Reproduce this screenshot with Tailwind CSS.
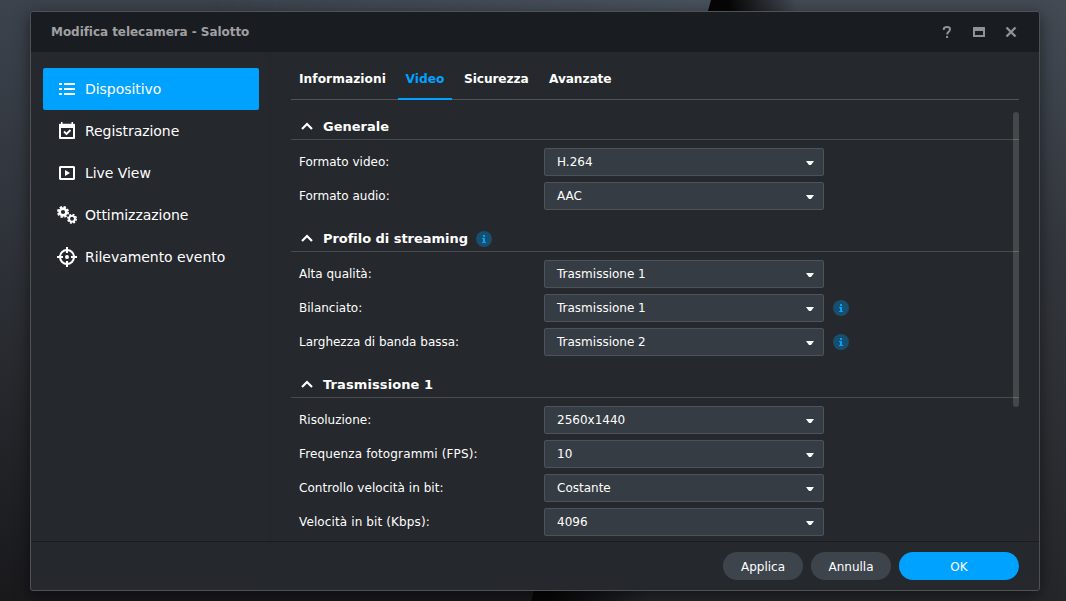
<!DOCTYPE html>
<html lang="it">
<head>
<meta charset="utf-8">
<title>Modifica telecamera</title>
<script src="https://cdn.jsdelivr.net/npm/@tailwindcss/browser@4"></script>
</head>
<body class="h-[601px] w-[1066px] overflow-hidden font-['DejaVu_Sans',Verdana,sans-serif] text-xs text-white">
<svg width="0" height="0" class="absolute">
  <symbol id="up" viewBox="0 0 12 8"><path d="M1 7l5-5 5 5" fill="none" stroke="#fff" stroke-width="2.2"/></symbol>
  <symbol id="down" viewBox="0 0 8 4"><path d="M0 0h8L5 4H3z" fill="#fff"/></symbol>
  <symbol id="info" viewBox="0 0 16 16"><circle cx="8" cy="8" r="8" fill="#184f6e"/><path d="M7 4h2v2H7zM6 7h3v4h1v1H6v-1h1V8H6z" fill="#00a2ff"/></symbol>
</svg>
<main class="relative isolate h-[601px] w-[1066px] overflow-hidden bg-linear-to-b from-[#3c434d] via-[#2b2e34] via-50% to-[#19191c] pt-[11px] pl-[30px]">
  <div class="absolute inset-0 -z-10 bg-linear-to-r from-transparent from-20% to-[#56636f]/45 to-65% mask-b-from-0% mask-b-to-50%"></div>
  <div class="absolute inset-0 -z-10 bg-linear-to-b from-[#434a54] via-[#33373d] via-40% to-[#25262a] [clip-path:polygon(711px_0,708px_11px,534px_590px,531px_601px,1066px_601px,1066px_0)]">
    <div class="absolute top-0 left-[706px] h-3 w-[90px] bg-linear-to-r from-[#060606] from-25% to-transparent"></div>
    <div class="absolute bottom-0 left-[530px] h-3 w-[120px] bg-linear-to-r from-[#060606] from-15% to-transparent"></div>
  </div>

  <section class="flex h-[580px] w-[1010px] flex-col overflow-hidden rounded-[3px] border border-[#505153] bg-[#25282c] shadow-[0_4px_16px_rgba(0,0,0,0.5)]">
    <header class="flex h-10 shrink-0 items-center bg-[#191c20] pl-5 pr-[19px] text-[#a0a1a3]">
      <h1 class="grow font-bold tracking-[-0.05px]">Modifica telecamera - Salotto</h1>
      <div class="flex items-center gap-[14px]">
        <svg class="size-[18px]" viewBox="0 0 18 18"><path d="M5.800 7V5.900Q6 4 9 4t3 2.300q0 1.500-1.500 2.500Q9.200 9.700 9.200 11.500M9.100 13v2" fill="none" stroke="#919293" stroke-width="2"/></svg>
        <svg class="size-[18px]" viewBox="0 0 18 18"><path d="M3.500 4h11a.5.5 0 0 1 .5.5v9a.5.5 0 0 1-.5.5h-11a.5.5 0 0 1-.5-.5v-9a.5.5 0 0 1 .5-.5zM5 8v4h8V8z" fill="#919293" fill-rule="evenodd"/></svg>
        <svg class="size-[18px]" viewBox="0 0 18 18"><path d="M4.500 4.500l9 9M13.500 4.500l-9 9" stroke="#919293" stroke-width="2.400"/></svg>
      </div>
    </header>

    <div class="flex h-[489px] shrink-0">
      <nav class="w-[240px] shrink-0 border-r border-[#222529] pt-4 pl-3 text-[14px] tracking-[-0.05px]">
        <a class="flex h-[42px] w-[216px] items-center gap-2 rounded-[2px] bg-[#00a2ff] pl-[14px]">
          <svg class="size-5" viewBox="0 0 20 20" fill="#fff"><path d="M2 4h3v2H2zM7 4h11v2H7zM2 9h3v2H2zM7 9h11v2H7zM2 14h3v2H2zM7 14h11v2H7z"/></svg>
          <span>Dispositivo</span>
        </a>
        <a class="flex h-[42px] w-[216px] items-center gap-2 pl-[14px]">
          <svg class="size-5" viewBox="0 0 20 20"><path d="M4 1h1.500v1.700h9V1H16v1.700h1.300l.7.7v14L17.300 18H2.700L2 17.300v-14l.7-.6H4zM4 7v9h12V7z" fill="#fff" fill-rule="evenodd"/><path d="M7 10.500l2.500 2.500 4-4" fill="none" stroke="#fff" stroke-width="1.800"/></svg>
          <span>Registrazione</span>
        </a>
        <a class="flex h-[42px] w-[216px] items-center gap-2 pl-[14px]">
          <svg class="size-5" viewBox="0 0 20 20" fill="#fff"><path d="M3 3h14l1 1v12l-1 1H3l-1-1V4zM4 5v10h12V5z" fill-rule="evenodd"/><path d="M8 7l5 3-5 3z"/></svg>
          <span>Live View</span>
        </a>
        <a class="flex h-[42px] w-[216px] items-center gap-2 pl-[14px]">
          <svg class="size-5" viewBox="0 0 20 20" fill="none" stroke="#fff"><circle cx="6" cy="7" r="3.400" stroke-width="2.600"/><circle cx="6" cy="7" r="5.100" stroke-width="1.800" stroke-dasharray="2.400 1.605"/><circle cx="15" cy="13.800" r="2.900" stroke-width="1.900"/><circle cx="15" cy="13.800" r="4.200" stroke-width="1.600" stroke-dasharray="1.900 1.399"/></svg>
          <span>Ottimizzazione</span>
        </a>
        <a class="flex h-[42px] w-[216px] items-center gap-2 pl-[14px]">
          <svg class="size-5" viewBox="0 0 20 20" fill="none" stroke="#fff" stroke-width="2"><circle cx="10" cy="10" r="7"/><path d="M10 0v6M10 14v6M0 10h6M14 10h6"/><circle cx="10" cy="10" r="2" fill="#fff" stroke="none"/></svg>
          <span>Rilevamento evento</span>
        </a>
      </nav>

      <div class="flex w-[748px] flex-col pl-5">
        <div class="mt-[6px] flex h-[42px] shrink-0 border-b border-[#515356] pl-2 text-[12.2px] font-bold">
          <span class="mr-[12px] w-[87px] pt-[13px] tracking-[0.05px]">Informazioni</span>
          <span class="-mb-px w-[54px] border-b-2 border-[#00a2ff] pt-[13px] text-center text-[#00a2ff]">Video</span>
          <span class="ml-3 w-[65px] pt-[13px] tracking-[-0.1px]">Sicurezza</span>
          <span class="ml-5 pt-[13px] tracking-[-0.1px]">Avanzate</span>
        </div>
        <div class="relative h-[441px] overflow-hidden pt-3">
          <h2 class="flex h-7 items-center gap-[10px] border-b border-[#494c4f] pl-[10px] text-[13px] font-bold"><svg class="h-2 w-3"><use href="#up"/></svg><span class="pt-[2px]">Generale</span></h2>
          <div class="mt-2 mb-[14px] flex flex-col gap-[6px]">
            <div class="flex h-7 items-center pl-2"><span class="w-[245px]">Formato video:</span><div class="flex h-7 w-[280px] items-center justify-between rounded-[2px] border border-[#4c535a] bg-[#363c43] pr-[9px] pl-3"><span>H.264</span><svg class="mt-[2px] h-1 w-2"><use href="#down"/></svg></div></div>
            <div class="flex h-7 items-center pl-2"><span class="w-[245px]">Formato audio:</span><div class="flex h-7 w-[280px] items-center justify-between rounded-[2px] border border-[#4c535a] bg-[#363c43] pr-[9px] pl-3"><span>AAC</span><svg class="mt-[2px] h-1 w-2"><use href="#down"/></svg></div></div>
          </div>
          <h2 class="flex h-7 items-center border-b border-[#494c4f] pl-[10px] text-[13px] font-bold"><svg class="mr-[10px] h-2 w-3"><use href="#up"/></svg><span class="w-[145px] pt-[2px] tracking-[-0.04px] whitespace-nowrap">Profilo di streaming</span><svg class="mt-[2px] ml-2 size-4"><use href="#info"/></svg></h2>
          <div class="mt-2 mb-[14px] flex flex-col gap-[6px]">
            <div class="flex h-7 items-center pl-2"><span class="w-[245px]">Alta qualità:</span><div class="flex h-7 w-[280px] items-center justify-between rounded-[2px] border border-[#4c535a] bg-[#363c43] pr-[9px] pl-3"><span>Trasmissione 1</span><svg class="mt-[2px] h-1 w-2"><use href="#down"/></svg></div></div>
            <div class="flex h-7 items-center pl-2"><span class="w-[245px]">Bilanciato:</span><div class="flex h-7 w-[280px] items-center justify-between rounded-[2px] border border-[#4c535a] bg-[#363c43] pr-[9px] pl-3"><span>Trasmissione 1</span><svg class="mt-[2px] h-1 w-2"><use href="#down"/></svg></div><svg class="ml-[9px] size-4"><use href="#info"/></svg></div>
            <div class="flex h-7 items-center pl-2"><span class="w-[245px]">Larghezza di banda bassa:</span><div class="flex h-7 w-[280px] items-center justify-between rounded-[2px] border border-[#4c535a] bg-[#363c43] pr-[9px] pl-3"><span>Trasmissione 2</span><svg class="mt-[2px] h-1 w-2"><use href="#down"/></svg></div><svg class="ml-[9px] size-4"><use href="#info"/></svg></div>
          </div>
          <h2 class="flex h-7 items-center gap-[10px] border-b border-[#494c4f] pl-[10px] text-[13px] font-bold"><svg class="h-2 w-3"><use href="#up"/></svg><span class="pt-[2px] tracking-[0.1px]">Trasmissione 1</span></h2>
          <div class="mt-2 flex flex-col gap-[6px]">
            <div class="flex h-7 items-center pl-2"><span class="w-[245px]">Risoluzione:</span><div class="flex h-7 w-[280px] items-center justify-between rounded-[2px] border border-[#4c535a] bg-[#363c43] pr-[9px] pl-3"><span>2560x1440</span><svg class="mt-[2px] h-1 w-2"><use href="#down"/></svg></div></div>
            <div class="flex h-7 items-center pl-2"><span class="w-[245px] tracking-[0.14px]">Frequenza fotogrammi (FPS):</span><div class="flex h-7 w-[280px] items-center justify-between rounded-[2px] border border-[#4c535a] bg-[#363c43] pr-[9px] pl-3"><span>10</span><svg class="mt-[2px] h-1 w-2"><use href="#down"/></svg></div></div>
            <div class="flex h-7 items-center pl-2"><span class="w-[245px] tracking-[0.05px]">Controllo velocità in bit:</span><div class="flex h-7 w-[280px] items-center justify-between rounded-[2px] border border-[#4c535a] bg-[#363c43] pr-[9px] pl-3"><span>Costante</span><svg class="mt-[2px] h-1 w-2"><use href="#down"/></svg></div></div>
            <div class="flex h-7 items-center pl-2"><span class="w-[245px] tracking-[0.12px]">Velocità in bit (Kbps):</span><div class="flex h-7 w-[280px] items-center justify-between rounded-[2px] border border-[#4c535a] bg-[#363c43] pr-[9px] pl-3"><span>4096</span><svg class="mt-[2px] h-1 w-2"><use href="#down"/></svg></div></div>
          </div>
          <div class="absolute top-3 right-0 h-[295px] w-[6px] rounded-full bg-white/15"></div>
        </div>
      </div>
    </div>

    <footer class="flex grow items-center justify-end gap-2 border-t border-[#1a1c20] pr-5">
      <button class="h-7 w-20 rounded-full bg-[#3d444b] pt-px">Applica</button>
      <button class="h-7 w-20 rounded-full bg-[#3d444b] pt-px">Annulla</button>
      <button class="h-7 w-[120px] rounded-full bg-[#00a2ff] pt-px">OK</button>
    </footer>
  </section>
</main>
</body>
</html>
